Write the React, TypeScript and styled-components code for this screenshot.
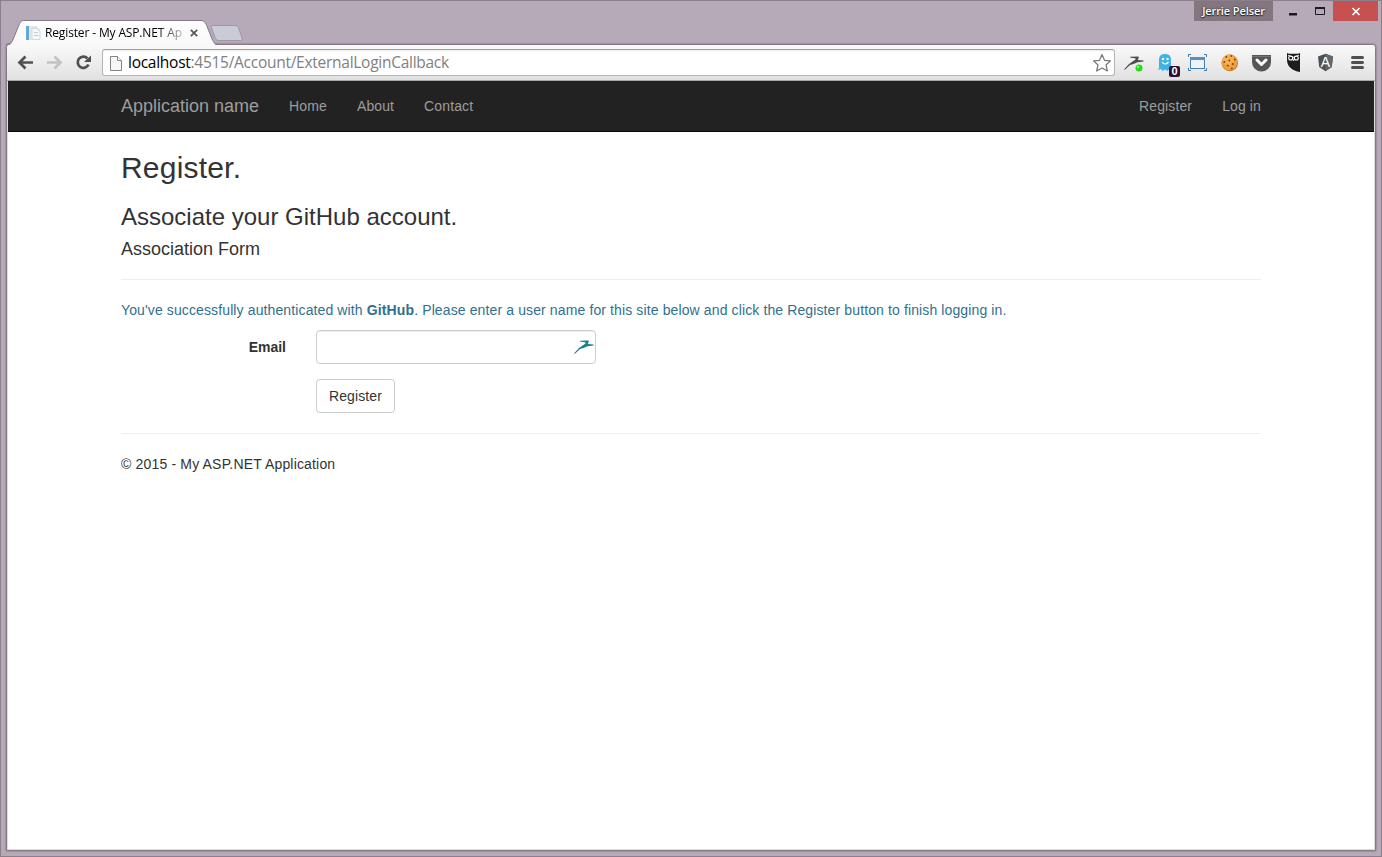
import React from "react";
import styled, { createGlobalStyle, css } from "styled-components";

const GlobalStyle = createGlobalStyle`
  * { box-sizing: border-box; }
  body { margin: 0; overflow: hidden; }
`;

const uiFont = `"Open Sans", "Noto Sans", sans-serif`;
const pageFont = `"Liberation Sans", Arial, sans-serif`;

const Window = styled.div`
  width: 1382px;
  height: 857px;
  display: flex;
  flex-direction: column;
  padding: 0 6px 5px;
  border: 1px solid #8c7f8c;
  background: #b7aab8;
`;

const TitleBar = styled.header`
  height: 43px;
  flex: none;
  display: flex;
  align-items: flex-start;
  margin-right: -3px;
`;

const TabStrip = styled.div`
  display: flex;
  flex: 1;
  padding-top: 19px;
`;

const Tab = styled.div`
  position: relative;
  z-index: 2;
  width: 204px;
  height: 26px;
  display: flex;
  align-items: center;
  padding-left: 18px;
  margin-left: 1px;
`;

const TabShape = styled.svg`
  position: absolute;
  left: -2px;
  top: 0;
  z-index: -1;
`;

const Favicon = styled.svg`
  flex: none;
  width: 16px;
  height: 16px;
`;

const TabTitle = styled.span`
  width: 139px;
  margin-left: 3px;
  white-space: nowrap;
  font: 12px/16px ${uiFont};
  letter-spacing: -0.14px;
  color: #000;
  mask-image: linear-gradient(to right, #000 112px, rgba(0, 0, 0, 0.25) 138px);
`;

const CloseTab = styled.svg`
  width: 8px;
  height: 8px;
  margin-left: 6px;
`;

const NewTab = styled.svg`
  width: 33px;
  height: 18px;
  margin: 4px 0 0 -2px;
`;

const Caption = styled.div`
  display: flex;
  height: 20px;
`;

const UserLabel = styled.div`
  width: 79px;
  height: 20px;
  background: #83767f;
  color: #fff;
  font: 600 11px/20px ${uiFont};
  letter-spacing: -0.1px;
  text-align: center;
  text-shadow: 0 0 2px #222, 0 1px 1px #222;
`;

const CaptionButton = styled.div<{ $w: number; $danger?: boolean }>`
  width: ${(p) => p.$w}px;
  height: 20px;
  background: ${(p) => (p.$danger ? "#c75050" : "transparent")};
  svg { display: block; }
`;

const Frame = styled.div`
  flex: 1;
  display: flex;
  flex-direction: column;
  border: 1px solid #857a86;
  border-radius: 4px 4px 1px 1px;
  margin: 0 -1px 0 -1px;
  box-shadow: 0 0 2px rgba(70, 55, 70, 0.7);
  background: #fff;
`;

const Toolbar = styled.div`
  height: 36px;
  flex: none;
  display: flex;
  align-items: flex-start;
  padding-left: 1px;
  border-bottom: 1px solid #aaa;
  border-radius: 3px 3px 0 0;
  background: linear-gradient(#f9f9f9, #e1e1e1);
`;

const NavIcons = styled.svg`
  width: 94px;
  height: 35px;
  flex: none;
`;

const Omnibox = styled.div`
  width: 1013px;
  height: 27px;
  margin: 4px 2px 0 0;
  display: flex;
  align-items: center;
  border: 1px solid #b4b4b4;
  border-top-color: #a0a0a0;
  border-radius: 3px;
  background: #fff;
  box-shadow: inset 0 1px 1px rgba(0, 0, 0, 0.08);
`;

const PageGlyph = styled.svg`
  width: 14px;
  height: 18px;
  margin-left: 6px;
`;

const Url = styled.span`
  flex: 1;
  margin-left: 5px;
  font: 15.5px/21px ${uiFont};
  letter-spacing: -0.27px;
  color: #808080;
  b { font-weight: 400; color: #000; }
`;

const Star = styled.svg`
  width: 20px;
  height: 20px;
  margin-right: 2px;
`;

const Extension = styled.div`
  position: relative;
  width: 32px;
  height: 35px;
  flex: none;
  svg { display: block; }
`;

const Badge = styled.span`
  position: absolute;
  left: 20px;
  top: 21px;
  width: 11px;
  height: 11px;
  border-radius: 2px;
  background: #2e1035;
  color: #fff;
  font: bold 11px/11px ${pageFont};
  text-align: center;
`;

const Page = styled.div`
  flex: 1;
  font: 14px/20px ${pageFont};
  letter-spacing: 0.12px;
  color: #333;
  border: solid #ddd;
  border-width: 0 1px 1px;
`;

const container = css`
  width: 1140px;
  margin-left: 113px;
`;

const Navbar = styled.nav`
  height: 51px;
  background: #222;
  border-bottom: 1px solid #080808;
`;

const NavInner = styled.div`
  ${container}
  display: flex;
  align-items: center;
  height: 50px;
  gap: 30px;
`;

const Brand = styled.a`
  font-size: 18px;
  letter-spacing: 0;
  color: #9d9d9d;
`;

const NavLink = styled.a<{ $push?: boolean }>`
  color: #9d9d9d;
  margin-left: ${(p) => (p.$push ? "auto" : "0")};
`;

const Content = styled.main`
  ${container}
`;

const Heading = styled.h2`
  margin: 19px 0 0;
  font: 500 30px/33px ${pageFont};
  letter-spacing: 0.2px;
`;

const SubHeading = styled.h3`
  margin: 20px 0 10px;
  font: 500 24px/26px ${pageFont};
  letter-spacing: 0;
`;

const FormTitle = styled.h4`
  margin: 0;
  font: 500 18px/19px ${pageFont};
  letter-spacing: 0;
`;

const Rule = styled.hr`
  height: 1px;
  margin: 20px 0;
  border: 0;
  background: #eee;
`;

const Info = styled.p`
  margin: 0 0 10px;
  color: #31708f;
`;

const Group = styled.div`
  display: grid;
  grid-template-columns: 165px 280px;
  column-gap: 30px;
  margin-bottom: 15px;
`;

const Label = styled.label`
  padding-top: 7px;
  font-weight: 700;
  letter-spacing: 0;
  text-align: right;
`;

const Field = styled.div`
  height: 34px;
  display: flex;
  justify-content: flex-end;
  align-items: center;
  padding-right: 1px;
  border: 1px solid #ccc;
  border-radius: 4px;
  box-shadow: inset 0 1px 1px rgba(0, 0, 0, 0.075);
`;

const Input = styled.input`
  flex: 1;
  min-width: 0;
  border: 0;
  outline: 0;
  background: transparent;
`;

const Submit = styled.button`
  grid-column: 2;
  justify-self: start;
  width: 79px;
  height: 34px;
  padding: 0;
  border: 1px solid #ccc;
  border-radius: 4px;
  background: #fff;
  color: #333;
  font: 14px/20px ${pageFont};
  letter-spacing: 0.12px;
`;

const Copyright = styled.p`
  margin: 0;
  letter-spacing: 0.17px;
`;

const gazelle = "M7 24.500 L12 19 L16 16.200 L18.600 14.500 L18.200 13.200 L13.500 12.700 L13 11.800 L21.500 11.500 L21.800 12.500 L20.800 15 L26.500 15.600 L26.500 16.400 L20.500 17.200 L16.500 19 L13 20 L8 24.800 Z";

const Ext = ({ children, badge }: { children: React.ReactNode; badge?: string }) => (
  <Extension>
    <svg width="32" height="35" viewBox="0 0 32 35">{children}</svg>
    {badge && <Badge>{badge}</Badge>}
  </Extension>
);

export default function App() {
  return (
    <>
      <GlobalStyle />
      <Window>
        <TitleBar>
          <TabStrip>
            <Tab>
              <TabShape width="212" height="27" viewBox="0 0 212 27">
                <defs>
                  <linearGradient id="tab" x1="0" y1="0" x2="0" y2="1">
                    <stop offset="0" stopColor="#fff" />
                    <stop offset="1" stopColor="#f8f8f8" />
                  </linearGradient>
                </defs>
                <path d="M1 26 C5 25 6 23 8 18 L13 5 C14.5 1.5 15.5 .5 18 .5 H195 C198 .5 199 2 200.500 5 L206 19 C208 23.500 209 25 212 26 Z" fill="url(#tab)" />
                <path d="M0 24.500 C5 24 6 22 8 17 L13 5 C14.5 1.5 15.5 .5 18 .5 H195 C198 .5 199 2 200.500 5 L206 19 C208 23 209 24.500 212 24.500" fill="none" stroke="#85798a" />
              </TabShape>
              <Favicon viewBox="0 0 16 16">
                <path d="M0 1h3v14H0z" fill="#63a9d8" />
                <path d="M3 1h8v14H3z" fill="#dfe5ea" />
                <path d="M6 3.500h5l3 3v8H6z" fill="#f7f8fa" stroke="#d3d9e0" />
                <path d="M8 7.500h4M8 10.500h5M10 2l4 4" stroke="#c3ccd6" />
              </Favicon>
              <TabTitle>Register - My ASP.NET Ap</TabTitle>
              <CloseTab viewBox="0 0 8 8"><path d="M.8.8l6.4 6.400M7.200.8L.8 7.200" stroke="#555" strokeWidth="1.7" /></CloseTab>
            </Tab>
            <NewTab viewBox="0 0 33 18">
              <path d="M3 1.500H25C27 1.500 28 2.500 29 5L32 14C32.500 16 32 16.500 30 16.500H9C7 16.500 6 15.500 5 13.500L1.500 4C1 2 1.500 1.500 3 1.500Z" fill="#c9cbd7" stroke="#a095a5" />
            </NewTab>
          </TabStrip>
          <Caption>
            <UserLabel>Jerrie Pelser</UserLabel>
            <CaptionButton $w={34}>
              <svg width="34" height="20"><path d="M16 12h8v2.500h-8z" fill="#1d1a1d" /></svg>
            </CaptionButton>
            <CaptionButton $w={26}>
              <svg width="26" height="20"><path d="M8.500 6.500h9v7h-9z" fill="none" stroke="#1d1a1d" /><path d="M8 6h10v2H8z" fill="#1d1a1d" /></svg>
            </CaptionButton>
            <CaptionButton $w={45} $danger>
              <svg width="45" height="20"><path d="M19.500 7l7 7M26.500 7l-7 7" stroke="#fff" strokeWidth="1.700" /></svg>
            </CaptionButton>
          </Caption>
        </TitleBar>

        <Frame>
          <Toolbar>
            <NavIcons viewBox="0 0 94 35">
              <g fill="none" strokeWidth="2.700">
                <path d="M25 17.500H12M17.500 11.500L11.500 17.500L17.500 23.500" stroke="#505050" />
                <path d="M39 17.500H52M46.500 11.500L52.500 17.500L46.500 23.500" stroke="#c2c2c2" />
                <path d="M79.500 13.500A5.600 5.600 0 1 0 80.500 19.500" stroke="#505050" />
              </g>
              <path d="M83 10.500V17H76Z" fill="#505050" />
            </NavIcons>
            <Omnibox>
              <PageGlyph viewBox="0 0 14 18">
                <path d="M1.500 2.500H8.500L12.500 6.500V16.500H1.500Z" fill="#f7f7f7" stroke="#848484" />
                <path d="M8.500 2.500V6.500H12.500" fill="#fff" stroke="#848484" />
              </PageGlyph>
              <Url><b>localhost</b>:4515/Account/ExternalLoginCallback</Url>
              <Star viewBox="0 0 20 20">
                <path d="M10 1.500L12.500 7.300L18.500 7.800L14 12L15.400 18L10 14.900L4.600 18L6 12L1.500 7.800L7.500 7.300Z" fill="#fff" stroke="#777" strokeWidth="1.200" strokeLinejoin="round" />
              </Star>
            </Omnibox>

            <Ext>
              <path d={gazelle} fill="#4d4d4d" />
              <circle cx="22" cy="23" r="3.500" fill="#25dd16" />
              <circle cx="21" cy="22" r="1.200" fill="#8dff78" />
            </Ext>
            <Ext badge="0">
              <path d="M10 23V15C10 11 12 9 16 9S22 11 22 15V22L24 25L20.500 24L18.500 26L16 24.500L13.500 26L12 24L9 25Z" fill="#3fb3e5" />
              <circle cx="14" cy="14" r="1.200" fill="#fff" />
              <circle cx="18.500" cy="14" r="1.200" fill="#fff" />
              <path d="M13 17Q16 21 19.500 17" fill="none" stroke="#fff" strokeWidth="1.200" />
            </Ext>
            <Ext>
              <path d="M7.500 12V9.500H10M23 9.500H25.500V12M25.500 23V25.500H23M10 25.500H7.500V23" fill="none" stroke="#3d77a5" />
              <rect x="9.500" y="12.500" width="14" height="11" fill="#eef2f5" stroke="#4380b0" />
              <path d="M9 12h15v3H9z" fill="#5291c2" />
            </Ext>
            <Ext>
              <g transform="translate(4.300 0)">
                <circle cx="12.500" cy="18" r="8.300" fill="#c97319" />
                <circle cx="12.200" cy="17.300" r="8" fill="#eda03c" />
                <circle cx="11" cy="15" r="5.500" fill="#f8bd63" opacity=".6" />
                <g fill="#804718">
                  <circle cx="9" cy="12" r="1" /><circle cx="14" cy="11" r=".9" />
                  <circle cx="17.500" cy="14.500" r="1" /><circle cx="12" cy="15.500" r="1" />
                  <circle cx="7" cy="17" r="1" /><circle cx="15.500" cy="19" r="1.100" />
                  <circle cx="10.500" cy="20.500" r="1" /><circle cx="14.500" cy="23.500" r=".9" />
                </g>
              </g>
            </Ext>
            <Ext>
              <path d="M7 10H26V17A9.500 9.500 0 0 1 7 17Z" fill="#565656" />
              <path d="M7 11.500H26" stroke="#747474" />
              <path d="M12 15L16.500 19.500L21 15" fill="none" stroke="#fff" strokeWidth="3" strokeLinecap="round" strokeLinejoin="round" />
            </Ext>
            <Ext>
              <path d="M10 8L12 8.800H21L23 8V27C15.500 26 10 21.500 10 15Z" fill="#201c1d" />
              <circle cx="13.700" cy="13" r="2" fill="#201c1d" stroke="#fff" strokeWidth="1.100" />
              <circle cx="19.300" cy="13" r="2" fill="#201c1d" stroke="#fff" strokeWidth="1.100" />
              <path d="M11 10.200L16.500 12.300L22 10.200M15.700 14L16.500 15.800L17.300 14" fill="none" stroke="#fff" strokeWidth=".9" />
            </Ext>
            <Ext>
              <path d="M16.500 8.700L24 11.400L22.800 22L16.500 26.300L10.200 22L9 11.400Z" fill="#4d5052" />
              <path d="M16.500 8.700L24 11.400L22.800 22L16.500 26.300Z" fill="#646769" />
              <text x="16.500" y="22" textAnchor="middle" fontFamily="Liberation Sans" fontSize="14" fill="#fff">A</text>
            </Ext>
            <Ext>
              <path d="M11.500 12.500H21.500M11.500 17.500H21.500M11.500 22.500H21.500" stroke="#505050" strokeWidth="3" strokeLinecap="round" />
            </Ext>
          </Toolbar>

          <Page>
            <Navbar>
              <NavInner>
                <Brand>Application name</Brand>
                <NavLink>Home</NavLink>
                <NavLink>About</NavLink>
                <NavLink>Contact</NavLink>
                <NavLink $push>Register</NavLink>
                <NavLink>Log in</NavLink>
              </NavInner>
            </Navbar>
            <Content>
              <Heading>Register.</Heading>
              <SubHeading>Associate your GitHub account.</SubHeading>
              <FormTitle>Association Form</FormTitle>
              <Rule />
              <Info>
                You've successfully authenticated with <strong>GitHub</strong>. Please enter a user name for this site below and click the Register button to finish logging in.
              </Info>
              <Group>
                <Label htmlFor="email">Email</Label>
                <Field>
                  <Input id="email" />
                  <svg width="21" height="14" viewBox="6 11 21 14"><path d={gazelle} fill="#16808f" /></svg>
                </Field>
              </Group>
              <Group>
                <Submit>Register</Submit>
              </Group>
              <Rule />
              <Copyright>© 2015 - My ASP.NET Application</Copyright>
            </Content>
          </Page>
        </Frame>
      </Window>
    </>
  );
}
